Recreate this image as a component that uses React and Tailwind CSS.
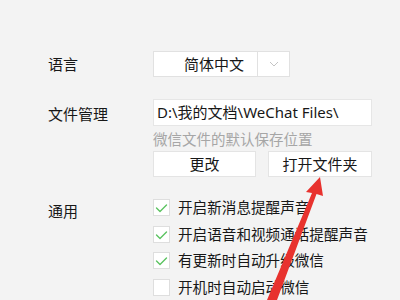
import React from 'react';

const FONT = { fontFamily: '"Noto Sans", "Noto Sans CJK SC", sans-serif' };

function Check() {
  return (
    <svg width="13" height="10" viewBox="0 0 13 10" fill="none">
      <polyline points="1.5,5 5,8.5 11.5,2" stroke="#5bc360" strokeWidth="1.4" strokeLinecap="round" strokeLinejoin="round" />
    </svg>
  );
}

function CheckRow({ checked, label, className = '' }) {
  return (
    <div className={`flex items-center h-[17px] ${className}`}>
      <div className="w-[17px] h-[17px] bg-white border border-[#dedede] flex items-center justify-center shrink-0">
        {checked && <Check />}
      </div>
      <span className="ml-[8px] text-[14.6px] leading-none text-[#171717] whitespace-nowrap">{label}</span>
    </div>
  );
}

export default function App() {
  return (
    <div className="relative w-[400px] h-[300px] bg-[#f3f3f3] overflow-hidden" style={FONT}>
      <div className="pt-[51px] pl-[48px]">
        {/* 语言 */}
        <div className="flex items-center h-[26px]">
          <div className="w-[105px] text-[15px] text-[#171717] pt-[1px]">语言</div>
          <div className="flex h-[26px] w-[137px] bg-white border border-[#e1e1e1]">
            <div className="w-[104px] flex items-center pl-[30px] text-[15px] text-[#171717] border-r border-[#e1e1e1]">简体中文</div>
            <div className="flex-1 flex items-center justify-center">
              <svg width="10" height="6" viewBox="0 0 10 6" fill="none">
                <polyline points="1,1 5,5 9,1" stroke="#c4c4c4" strokeWidth="1" />
              </svg>
            </div>
          </div>
        </div>

        {/* 文件管理 */}
        <div className="flex mt-[22px]">
          <div className="w-[105px] h-[27px] flex items-center text-[15px] text-[#171717] pt-[3px]">文件管理</div>
          <div className="flex flex-col">
            <div className="w-[219px] h-[27px] bg-white border border-[#e6e6e6] flex items-center pl-[3px] text-[15px] text-[#171717] whitespace-nowrap">
              D:\我的文档\WeChat Files\
            </div>
            <div className="mt-[3px] h-[20px] text-[14.5px] leading-[20px] text-[#a6a6a6] whitespace-nowrap">微信文件的默认保存位置</div>
            <div className="flex gap-[12px] mt-[2px]">
              <div className="w-[103px] h-[26px] bg-white border border-[#e4e4e4] flex items-center justify-center text-[15px] text-[#171717]">更改</div>
              <div className="w-[104px] h-[26px] bg-white border border-[#e4e4e4] flex items-center justify-center text-[15px] text-[#171717]">打开文件夹</div>
            </div>
          </div>
        </div>

        {/* 通用 */}
        <div className="flex mt-[22px]">
          <div className="w-[105px] text-[15px] text-[#171717] leading-none pt-[5px]">通用</div>
          <div className="flex flex-col">
            <CheckRow checked label="开启新消息提醒声音" />
            <CheckRow checked label="开启语音和视频通话提醒声音" className="mt-[10px]" />
            <CheckRow checked label="有更新时自动升级微信" className="mt-[9px]" />
            <CheckRow label="开机时自动启动微信" className="mt-[10px]" />
          </div>
        </div>
      </div>

      {/* red annotation arrow */}
      <svg className="absolute inset-0 pointer-events-none" width="400" height="300" viewBox="0 0 400 300">
        <polygon
          points="320,177 323,196 316.5,194 277,300 267,300 312,193 306,192"
          fill="#e8322e"
        />
      </svg>
    </div>
  );
}
